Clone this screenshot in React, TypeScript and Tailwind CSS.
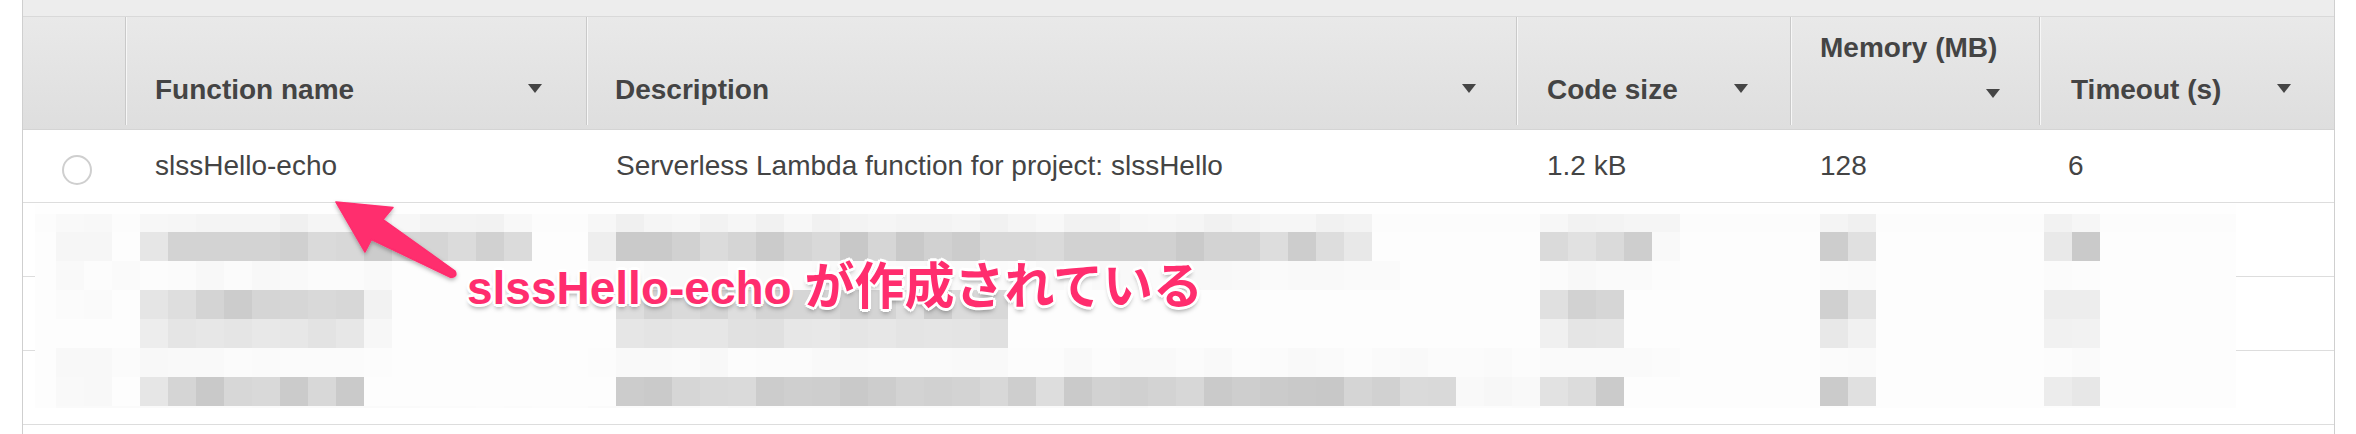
import React from "react";

type Seg = [number, number, number, number];

const rnd = (i: number, j: number) => {
  const v = Math.sin(i * 12.9898 + j * 78.233) * 43758.5453;
  return v - Math.floor(v);
};

const BANDS: { h: number; segs: Seg[]; base: number }[] = [
  { h: 10, segs: [], base: 254 },
  {
    h: 18,
    base: 252,
    segs: [
      [56, 112, 247, 250],
      [140, 532, 240, 248],
      [588, 1372, 240, 248],
      [1540, 1680, 240, 248],
      [1820, 1876, 240, 246],
      [2044, 2100, 242, 248],
    ],
  },
  {
    h: 29,
    base: 253,
    segs: [
      [56, 112, 244, 250],
      [140, 168, 228, 232],
      [168, 532, 200, 220],
      [588, 616, 236, 240],
      [616, 1344, 200, 222],
      [1344, 1372, 228, 234],
      [1540, 1652, 200, 228],
      [1652, 1680, 246, 249],
      [1820, 1848, 202, 206],
      [1848, 1876, 222, 226],
      [2044, 2072, 228, 234],
      [2072, 2100, 200, 205],
    ],
  },
  {
    h: 29,
    base: 253,
    segs: [
      [56, 392, 248, 252],
      [588, 1400, 248, 252],
      [1540, 1680, 248, 252],
      [1820, 1876, 249, 252],
      [2044, 2100, 249, 252],
    ],
  },
  {
    h: 29,
    base: 253,
    segs: [
      [56, 112, 250, 252],
      [140, 168, 228, 232],
      [168, 364, 204, 222],
      [364, 392, 242, 245],
      [616, 1008, 205, 222],
      [1540, 1568, 222, 226],
      [1568, 1624, 210, 216],
      [1820, 1848, 206, 210],
      [1848, 1876, 226, 230],
      [2044, 2100, 234, 238],
    ],
  },
  {
    h: 29,
    base: 253,
    segs: [
      [140, 168, 236, 240],
      [168, 364, 222, 232],
      [364, 392, 246, 248],
      [616, 1008, 222, 232],
      [1540, 1568, 238, 242],
      [1568, 1624, 228, 232],
      [1820, 1848, 228, 232],
      [1848, 1876, 238, 242],
      [2044, 2100, 240, 244],
    ],
  },
  {
    h: 29,
    base: 253,
    segs: [
      [56, 392, 248, 252],
      [588, 1540, 248, 252],
      [1540, 1680, 249, 252],
      [1820, 1876, 249, 252],
      [2044, 2100, 249, 252],
    ],
  },
  {
    h: 29,
    base: 253,
    segs: [
      [56, 112, 246, 249],
      [140, 168, 228, 232],
      [168, 364, 200, 218],
      [616, 1456, 200, 222],
      [1456, 1540, 247, 250],
      [1540, 1596, 220, 226],
      [1596, 1624, 200, 204],
      [1820, 1848, 202, 206],
      [1848, 1876, 220, 224],
      [2044, 2072, 236, 240],
      [2072, 2100, 228, 232],
    ],
  },
  { h: 2, segs: [[56, 1540, 250, 252]], base: 253 },
];

function blockColor(band: number, i: number) {
  const cx = i * 28 + 14;
  const b = BANDS[band];
  let g = b.base;
  for (const [x0, x1, lo, hi] of b.segs) {
    if (cx >= x0 && cx < x1) {
      g = Math.round(lo + rnd(i, band) * (hi - lo));
      break;
    }
  }
  return `rgb(${g},${g},${g})`;
}

function Mosaic() {
  const idx = Array.from({ length: 79 }, (_, k) => k + 1);
  return (
    <div className="absolute left-[35px] top-[204px] w-[2201px] h-[204px] bg-[#fdfdfd] overflow-hidden flex flex-col">
      {BANDS.map((b, bi) => (
        <div key={bi} className="flex shrink-0" style={{ height: b.h }}>
          {idx.map((i) => (
            <div
              key={i}
              className="shrink-0 h-full"
              style={{ width: i === 1 ? 21 : 28, backgroundColor: blockColor(bi, i) }}
            />
          ))}
        </div>
      ))}
    </div>
  );
}

function Caret({ className = "" }: { className?: string }) {
  return (
    <span
      className={`inline-block w-0 h-0 border-l-[7px] border-r-[7px] border-t-[9px] border-l-transparent border-r-transparent border-t-[#454545] ${className}`}
    />
  );
}

function Sep() {
  return <div className="w-[2px] h-[108px] shrink-0 border-l border-[#c9c9c9] bg-[#f7f7f7]" />;
}

function HeadCell({ w, pl, pr, label }: { w: string; pl: string; pr: string; label: string }) {
  return (
    <div className={`flex shrink-0 ${w}`}>
      <Sep />
      <div className={`flex-1 flex items-end justify-between pb-[18px] ${pl} ${pr}`}>
        <span className="text-[28px] leading-[42px] font-bold text-[#444]">{label}</span>
        <Caret className="mb-[18px]" />
      </div>
    </div>
  );
}

export default function App() {
  return (
    <div className="relative w-[2356px] h-[434px] bg-white overflow-hidden font-['Liberation_Sans','Arial',sans-serif]">
      <div className="ml-[22px] w-[2313px] h-[434px] border-x border-[#cfcfcf] flex flex-col">
        <div className="h-[17px] shrink-0 bg-[#ededed] border-b border-[#d9d9d9]" />
        <div className="h-[113px] shrink-0 flex bg-gradient-to-b from-[#e9e9e9] to-[#dedede] border-b border-[#d4d4d4]">
          <div className="w-[102px] shrink-0" />
          <HeadCell w="w-[461px]" pl="pl-[28px]" pr="pr-[44px]" label="Function name" />
          <HeadCell w="w-[930px]" pl="pl-[27px]" pr="pr-[40px]" label="Description" />
          <HeadCell w="w-[274px]" pl="pl-[29px]" pr="pr-[42px]" label="Code size" />
          <div className="flex shrink-0 w-[249px]">
            <Sep />
            <div className="flex-1 flex flex-col justify-end pb-[18px] pl-[28px] pr-[39px]">
              <span className="text-[28px] leading-[42px] font-bold text-[#444] whitespace-nowrap">Memory (MB)</span>
              <div className="h-[42px] flex justify-end items-start pt-[20px]">
                <Caret />
              </div>
            </div>
          </div>
          <HeadCell w="flex-1" pl="pl-[30px]" pr="pr-[43px]" label="Timeout (s)" />
        </div>

        <div className="h-[73px] shrink-0 flex border-b border-[#dddddd] text-[28px] leading-[42px] text-[#444]">
          <div className="w-[102px] shrink-0 pt-[25px] pl-[39px]">
            <div className="w-[30px] h-[30px] rounded-full border-2 border-[#cfcfcf] bg-white" />
          </div>
          <div className="w-[461px] shrink-0 flex items-center pl-[30px]">slssHello-echo</div>
          <div className="w-[930px] shrink-0 flex items-center pl-[30px]">
            Serverless Lambda function for project: slssHello
          </div>
          <div className="w-[274px] shrink-0 flex items-center pl-[31px]">1.2 kB</div>
          <div className="w-[249px] shrink-0 flex items-center pl-[30px]">128</div>
          <div className="flex-1 flex items-center pl-[29px]">6</div>
        </div>
        <div className="h-[74px] shrink-0 border-b border-[#dddddd]" />
        <div className="h-[74px] shrink-0 border-b border-[#dddddd]" />
        <div className="h-[74px] shrink-0 border-b border-[#dddddd]" />
        <div className="flex-1" />
      </div>

      <Mosaic />

      <svg
        className="absolute left-0 top-0 pointer-events-none"
        width="2356"
        height="434"
        viewBox="0 0 2356 434"
      >
        <defs>
          <filter id="ash" x="-20%" y="-20%" width="140%" height="140%">
            <feDropShadow dx="0" dy="2" stdDeviation="2" floodColor="#000" floodOpacity="0.3" />
          </filter>
        </defs>
        <path
          d="M336 202 L393 207.5 L383 219.5 L455 271 Q458 277 451 277.5 L371.5 239.5 L365 252 Z"
          fill="#ff2d6e"
          stroke="#ff2d6e"
          strokeWidth="1.5"
          strokeLinejoin="round"
          filter="url(#ash)"
        />
      </svg>

      <div className="absolute left-[467px] top-[258px] whitespace-nowrap leading-[48px] font-bold text-[#ff2d6e] font-['Liberation_Sans','Noto_Sans_CJK_JP',sans-serif] [text-shadow:3px_0_0_#fff,-3px_0_0_#fff,0_3px_0_#fff,0_-3px_0_#fff,2px_2px_0_#fff,-2px_2px_0_#fff,2px_-2px_0_#fff,-2px_-2px_0_#fff,0_4px_5px_rgba(0,0,0,0.4)]">
        <span className="text-[46px]">slssHello-echo</span>
        <span className="text-[46px]"> </span>
        <span className="text-[50px] font-['Noto_Sans_CJK_JP',sans-serif]">が作成されている</span>
      </div>
    </div>
  );
}
